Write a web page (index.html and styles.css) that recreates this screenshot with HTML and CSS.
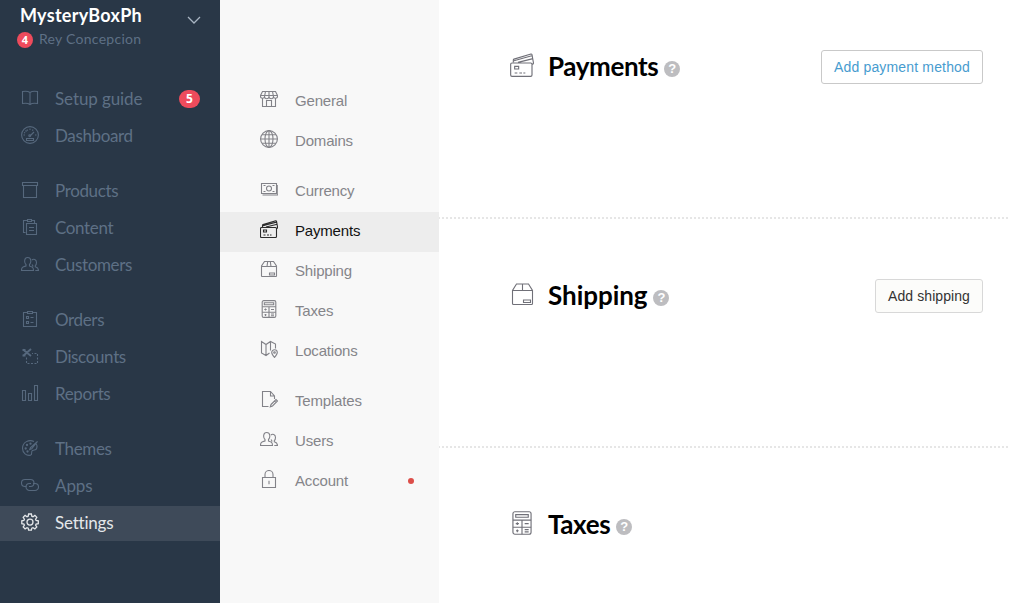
FILE: index.html
```html
<!DOCTYPE html>
<html lang="en">
<head>
<meta charset="utf-8">
<title>Settings</title>
<link rel="stylesheet" href="styles.css">
</head>
<body>
<svg class="sprite" aria-hidden="true">
  <symbol id="book" viewBox="0 0 18 18"><path d="M9 3.500C7 2 4 2 1.500 2.500V14.500C4 14 7 14 9 15.500C11 14 14 14 16.500 14.500V2.500C14 2 11 2 9 3.500V15.500"/></symbol>
  <symbol id="gauge" viewBox="0 0 18 18"><circle cx="9" cy="9" r="8.400"/><path d="M5.500 12.500h7v2h-7zM9 10l4-4M9 2.500v1.500M4.500 4.500l1 1M2.500 9H4M14 9h1.500M6 3.500l.5 1.200M12 3.500l-.5 1.200M3 6.500l1.200.5"/><circle cx="8.700" cy="9.800" r=".9"/></symbol>
  <symbol id="box" viewBox="0 0 18 18"><path d="M1.500 1.500h15v3h-15zM2.500 4.500h13v12h-13z"/></symbol>
  <symbol id="pages" viewBox="0 0 18 18"><path d="M4.500 14.500h-2v-12H6M11 2.500h2.500V5M6.500 1.500h4v2h-4zM5.500 5.500h10v11h-10zM8 9.500h5M8 12.500h5"/></symbol>
  <symbol id="people" viewBox="0 0 18 18"><path d="M.5 15.500C.5 12 2 11.800 5 11V9.500C3 7.500 3 2.500 6.700 2.500S10.500 7.500 8.500 9.500V11C11 11.800 12.500 12 12.500 15.500z"/><path d="M10.800 5C12.500 3.500 15.500 4.200 15.500 7.500C15.500 9 15 10 14.300 10.600V11.800C16.800 12.500 17.500 13 17.500 15.500H14.300M11 9.500l.8 1.200v1"/></symbol>
  <symbol id="orders" viewBox="0 0 18 18"><path d="M6 2.500H2.500v14h13v-14H12M6.500 1.500h5v2h-5zM5.500 6.500h2v2h-2zM5.500 11.500h2v2h-2zM9.500 7.500h3M9.500 12.500h3"/></symbol>
  <symbol id="scissors" viewBox="0 0 18 18"><path d="M2 2.500l8 6.500M10 2l-8 7M1.500 3h3M1.500 8.500h3" stroke-width="1.900"/><path d="M5.500 10.500v6h11v-10H11" stroke-dasharray="2 1.500"/></symbol>
  <symbol id="chart" viewBox="0 0 18 18"><path d="M1.500 6.500h3v10h-3zM7.500 9.500h3v7h-3zM13.500 1.500h3v15h-3z"/></symbol>
  <symbol id="palette" viewBox="0 0 18 18"><path d="M13 2.500C8 .1 1.600 3 1.500 9.300C1.500 14 5.500 17 9.500 16.200C12 15.500 9.500 12.500 11.500 11.500C13.500 10.500 15 12 15.800 9C16.200 7.500 16 6 15.300 5M16.500 2.500L9.500 8.500l-.8 2 2-.8z"/><circle cx="6" cy="6" r=".6"/><circle cx="9.500" cy="4.700" r=".6"/><circle cx="4.700" cy="9.500" r=".6"/><circle cx="6.500" cy="12.500" r=".6"/></symbol>
  <symbol id="links" viewBox="0 0 18 18"><path d="M5.500 10.500H4A3.500 3.500 0 0 1 4 3.500h5.500a3.500 3.500 0 0 1 0 7H8"/><path d="M12 7.500h2a3.500 3.500 0 0 1 0 7H8.500a3.500 3.500 0 0 1 0-7H10"/></symbol>
  <symbol id="gear" viewBox="0 0 18 18"><path d="M7.600 1h2.800l.4 2.200 1.200.5 1.900-1.300 1.900 1.900-1.200 1.900.5 1.200 2.200.4v2.800l-2.200.4-.5 1.100 1.200 1.900-1.900 1.900-1.900-1.200-1.200.5-.4 2H7.600l-.4-2-1.200-.5-1.900 1.200-1.900-1.900 1.200-1.900-.5-1.100-2.100-.4V7.800l2.100-.4.5-1.200-1.200-1.900 1.900-1.900L6 3.700l1.200-.5z"/><circle cx="9" cy="9.100" r="3"/></symbol>
  <symbol id="store" viewBox="0 0 18 18"><path d="M2.500 1.500h13l2 4v.5a2 2 0 0 1-4 .5a2.200 2.200 0 0 1-4.500 0a2.200 2.200 0 0 1-4.500 0a2 2 0 0 1-4-.5v-.5zM.5 5.500h17M5.500 1.500l-1 5M9 1.500v5M12.500 1.500l1 5M2.500 8v8.500h13V8M6.500 16.500v-6h5v6"/></symbol>
  <symbol id="globe" viewBox="0 0 18 18"><circle cx="9" cy="9" r="8.400"/><ellipse cx="9" cy="9" rx="4" ry="8.400"/><path d="M9 .5v17M.5 9h17M2 4.700h14M2 13.300h14"/></symbol>
  <symbol id="cash" viewBox="0 0 18 18"><path d="M1.500 3.500h15v10h-15zM3.500 5.500h2M3.500 11.500h2M12.500 5.500h2M14.500 11.500h-2M2.500 15h15.300V5"/><circle cx="9" cy="8.500" r="2.500"/></symbol>
  <symbol id="cards" viewBox="0 0 18 18"><path d="M1.500 7.500h14q1 0 1 1v8q0 1-1 1h-14q-1 0-1-1v-8q0-1 1-1zM2.500 7V5.300q0-.5.500-.7L15.700.8q.6-.1.800.4L17.600 7.500q0 .8-1 1M3 5.800l13.300-3.700M6 7L17.200 4.200"/><path d="M3.500 10h3v2h-3zM3.500 15h2M7 15h2M10 15h1.500"/></symbol>
  <symbol id="parcel" viewBox="0 0 18 18"><path d="M1.500 6v10q0 .5.500.5h14q.5 0 .5-.5V6l-3-4.500h-9zM1.500 6.500h15M7.700 1.500l-.7 5M10.300 1.500l.7 5M9.500 13h5v2h-5z"/></symbol>
  <symbol id="parcel-large" viewBox="0 0 24 24"><path d="M2.500 8.500v13q0 1 1 1h18q1 0 1-1v-13l-4-6.500h-12zM2.500 8.500h20M12.500 2v6.500M13.500 18h7v2.500h-7z"/></symbol>
  <symbol id="calc" viewBox="0 0 18 18"><rect x="2.200" y=".6" width="13.600" height="16.800" rx="1.500"/><path d="M4.300 2.700h9.400v2H4.300zM2.200 6.800h13.600M2.200 12.200h13.600M9 6.800v10.600M4.300 9.500h2.400M5.500 8.500v2M11 9.500h3M4.500 14.800h2M5.500 13.900v2M11 14h3M11 15.700h3"/></symbol>
  <symbol id="map" viewBox="0 0 18 18"><path d="M9.500 13l-3.500 2.500-4.500-2.500V1.500L6 4.500l4.500-3L15.500 4v4.500M6 4.500v11M10.500 1.500v9"/><path d="M14.500 17.500C12.500 15 11.700 14 11.700 12.500a2.800 2.800 0 0 1 5.600 0C17.300 14 16.500 15 14.500 17.500z"/><circle cx="14.500" cy="12.500" r=".8"/></symbol>
  <symbol id="doc" viewBox="0 0 18 18"><path d="M8.500 16.500h-6v-15h8l4 4.500v3M10.500 1.500V6h4M11 14.500l5-5 1.500 1.500-5 5-2.200.8zM14.500 11l1.500 1.500"/></symbol>
  <symbol id="lock" viewBox="0 0 18 18"><path d="M2.500 7.500h13v10h-13zM5 7.500V4.500a4 4 0 0 1 8 0v3M9 10.800v3.500"/></symbol>
</svg>
<div class="app">
  <aside class="sidebar">
    <header class="account">
      <div class="account-row">
        <h1 class="shop">MysteryBoxPh</h1>
        <svg class="chevron" viewBox="0 0 14 8"><path d="M1 1l6 6 6-6"/></svg>
      </div>
      <div class="owner"><span class="count">4</span><span class="owner-name">Rey Concepcion</span></div>
    </header>
    <nav class="menu">
      <a class="item wide"><svg class="icon"><use href="#book"/></svg><span>Setup guide</span><b class="pill">5</b></a>
      <a class="item"><svg class="icon"><use href="#gauge"/></svg><span>Dashboard</span></a>
      <a class="item first"><svg class="icon"><use href="#box"/></svg><span>Products</span></a>
      <a class="item"><svg class="icon"><use href="#pages"/></svg><span>Content</span></a>
      <a class="item"><svg class="icon"><use href="#people"/></svg><span>Customers</span></a>
      <a class="item first"><svg class="icon"><use href="#orders"/></svg><span>Orders</span></a>
      <a class="item"><svg class="icon"><use href="#scissors"/></svg><span>Discounts</span></a>
      <a class="item"><svg class="icon"><use href="#chart"/></svg><span>Reports</span></a>
      <a class="item first"><svg class="icon"><use href="#palette"/></svg><span>Themes</span></a>
      <a class="item wide"><svg class="icon"><use href="#links"/></svg><span>Apps</span></a>
      <a class="item active"><svg class="icon"><use href="#gear"/></svg><span>Settings</span></a>
    </nav>
  </aside>
  <nav class="subnav">
    <a class="sub"><svg class="icon"><use href="#store"/></svg><span>General</span></a>
    <a class="sub"><svg class="icon"><use href="#globe"/></svg><span>Domains</span></a>
    <a class="sub first"><svg class="icon"><use href="#cash"/></svg><span>Currency</span></a>
    <a class="sub active"><svg class="icon"><use href="#cards"/></svg><span>Payments</span></a>
    <a class="sub"><svg class="icon"><use href="#parcel"/></svg><span>Shipping</span></a>
    <a class="sub"><svg class="icon"><use href="#calc"/></svg><span>Taxes</span></a>
    <a class="sub"><svg class="icon"><use href="#map"/></svg><span>Locations</span></a>
    <a class="sub first"><svg class="icon"><use href="#doc"/></svg><span>Templates</span></a>
    <a class="sub"><svg class="icon"><use href="#people"/></svg><span>Users</span></a>
    <a class="sub"><svg class="icon"><use href="#lock"/></svg><span>Account</span><i class="dot"></i></a>
  </nav>
  <main class="content">
    <section class="panel">
      <svg class="big-icon"><use href="#cards"/></svg>
      <h2 class="title">Payments</h2><span class="help">?</span>
      <button class="button link">Add payment method</button>
    </section>
    <section class="panel">
      <svg class="big-icon thin"><use href="#parcel-large"/></svg>
      <h2 class="title loose">Shipping</h2><span class="help">?</span>
      <button class="button">Add shipping</button>
    </section>
    <section class="panel last">
      <svg class="big-icon"><use href="#calc"/></svg>
      <h2 class="title">Taxes</h2><span class="help">?</span>
    </section>
  </main>
</div>
</body>
</html>
```
FILE: styles.css
```css
* { box-sizing: border-box; }
body { margin: 0; height: 603px; overflow: hidden; background: #fff; font-family: "Liberation Sans", Arial, sans-serif; }
.sprite { display: none; }
.app { display: flex; height: 603px; }
.icon, .big-icon, .chevron { fill: none; stroke: currentColor; stroke-width: 1.1; flex: none; }
.icon { width: 18px; height: 18px; }

.sidebar { width: 220px; flex: none; background: #293747; font-family: Lato, sans-serif; }
.account { height: 82px; padding: 3px 19px 0 20px; }
.account-row { display: flex; justify-content: space-between; align-items: center; height: 24px; }
.shop { margin: 0; font-size: 18px; line-height: 24px; font-weight: 700; letter-spacing: .28px; color: #fff; }
.chevron { width: 14px; height: 8px; margin-top: 10px; stroke: #a9b5c3; stroke-width: 1.3; }
.owner { display: flex; align-items: center; gap: 6px; height: 16px; margin: 5px 0 0 -3px; font-size: 14px; letter-spacing: .27px; color: #5e7085; }
.owner-name { line-height: 16px; margin-top: -3px; }
.count { width: 16px; height: 16px; border-radius: 8px; background: #ee4b5c; color: #fff; font: bold 11px/16px "Open Sans", sans-serif; letter-spacing: 0; text-align: center; }
.menu { display: flex; flex-direction: column; gap: 2px; }
.item { display: flex; align-items: center; height: 35px; padding: 0 20px 0 21px; color: #5e7085; font-size: 17px; letter-spacing: -.36px; }
.item.wide { letter-spacing: -.1px; }
.item span { margin-left: 16px; line-height: 20px; margin-top: -2px; }
.item .icon { margin-top: -3px; color: #56687d; }
.item.first { margin-top: 18px; }
.item.active { background: #3e4a59; color: #e4e7ea; letter-spacing: -.22px; }
.item.active .icon { color: #e4e7ea; stroke-width: 1.3; }
.item .pill { width: 21px; height: 18px; margin: -1px 0 0 auto; border-radius: 9px; background: #ee4b5c; color: #fff; font: bold 12px/18px "Open Sans", sans-serif; letter-spacing: 0; text-align: center; }

.subnav { width: 219px; flex: none; padding-top: 82px; background: #f8f8f8; }
.sub { display: flex; align-items: center; height: 40px; padding: 0 25px 0 40px; font-size: 15px; letter-spacing: -.18px; color: #85858a; }
.sub .icon { margin: -6px 17px 0 0; color: #828288; }
.sub span { margin-top: -4px; }
.sub.first { margin-top: 10px; }
.sub.active { background: #ededed; color: #111; }
.sub.active .icon { color: #2b2b2b; }
.dot { width: 6px; height: 6px; margin: -2px 0 0 auto; border-radius: 50%; background: #dc4e49; }

.content { flex: 1; height: 603px; }
.panel { display: flex; align-items: flex-start; height: 229px; width: 569px; padding: 60px 25px 0 71px; background: repeating-linear-gradient(90deg, #e6e6e6 0 1px, transparent 1px 3px, #e6e6e6 3px 4px) 0 100% / 100% 2px no-repeat; }
.panel:first-child { height: 219px; padding-top: 50px; }
.panel.last { height: 155px; background: none; }
.big-icon { width: 24px; height: 24px; margin: 3px 13px 0 0; color: #707078; stroke-width: .85; }
.big-icon.thin { stroke-width: 1.1; }
.title { margin: 0 0 0 1px; font: 700 26px/32px Lato, sans-serif; letter-spacing: -.4px; color: #000; }
.title.loose { letter-spacing: -.05px; }
.help { width: 16px; height: 16px; margin: 11px 0 0 6px; border-radius: 50%; background: #bdbdc0; color: #fff; font: bold 13px/16px "Liberation Sans", sans-serif; text-align: center; }
.button { height: 34px; margin-left: auto; padding: 0 12px; border: 1px solid #d8d8d8; border-radius: 3px; background: #fcfcfa; color: #333; font: 14px/30px "Liberation Sans", sans-serif; letter-spacing: .08px; white-space: nowrap; }
.button.link { border-color: #c9c9c9; background: #fff; color: #479ccf; letter-spacing: .16px; }
```
